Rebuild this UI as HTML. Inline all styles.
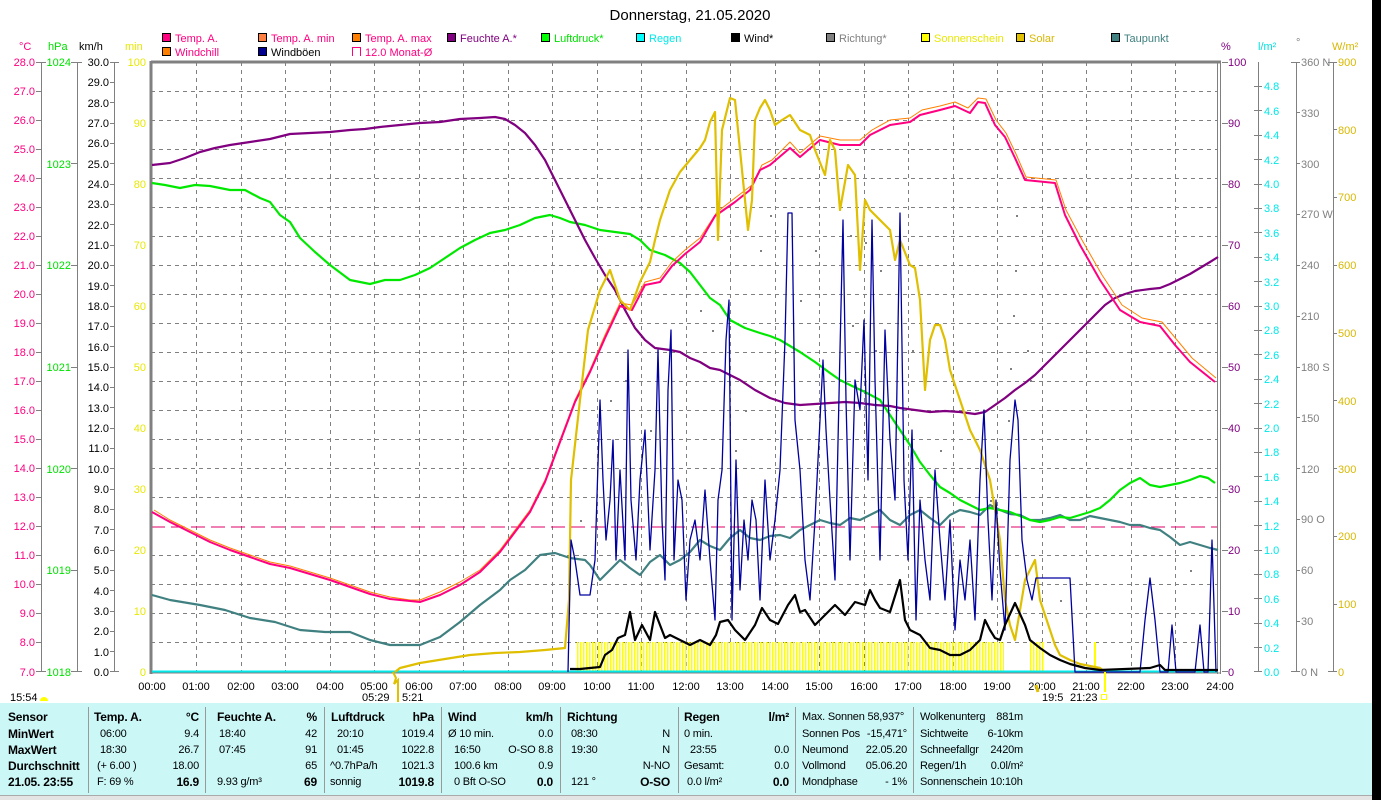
<!DOCTYPE html>
<html><head><meta charset="utf-8"><style>
html,body{margin:0;padding:0;background:#fff;width:1381px;height:800px;overflow:hidden;position:relative;font-family:"Liberation Sans",sans-serif;}
svg{position:absolute;left:0;top:0}
svg text{font-family:"Liberation Sans",sans-serif;font-size:11px}
#tbl{position:absolute;left:0;top:703px;width:1372px;height:92px;background:#cbf7f7;font-size:11px;color:#000;letter-spacing:-0.2px}
#tbl div{position:absolute;white-space:nowrap;line-height:14px}
.b{font-weight:bold;font-size:12px}
.r{text-align:right}
.sep{position:absolute;top:4px;width:1px;height:86px;background:#999}
#blk{position:absolute;left:1372px;top:0;width:9px;height:800px;background:#000}
#bot{position:absolute;left:0;top:795px;width:1372px;height:5px;background:#e4e4e4;border-top:1px solid #aaa}
</style></head><body>
<svg width="1381" height="703" viewBox="0 0 1381 703">
<defs>
<pattern id="sun" x="577" y="0" width="3" height="10" patternUnits="userSpaceOnUse"><rect x="0" y="0" width="1.5" height="10" fill="#ffff00"/></pattern>
</defs>
<text x="690" y="20" text-anchor="middle" style="font-size:15px">Donnerstag, 21.05.2020</text>
<g stroke="#000" stroke-width="1">
<rect x="162.5" y="33.5" width="8" height="8" fill="#ff0080"/>
<rect x="258.5" y="33.5" width="8" height="8" fill="#ff8040"/>
<rect x="352.5" y="33.5" width="8" height="8" fill="#ff8000"/>
<rect x="447.5" y="33.5" width="8" height="8" fill="#800080"/>
<rect x="541.5" y="33.5" width="8" height="8" fill="#00ff00"/>
<rect x="636.5" y="33.5" width="8" height="8" fill="#00ffff"/>
<rect x="731.5" y="33.5" width="8" height="8" fill="#000"/>
<rect x="826.5" y="33.5" width="8" height="8" fill="#808080"/>
<rect x="921.5" y="33.5" width="8" height="8" fill="#ffff00"/>
<rect x="1016.5" y="33.5" width="8" height="8" fill="#e0c000"/>
<rect x="1111.5" y="33.5" width="8" height="8" fill="#408080"/>
<rect x="162.5" y="47.5" width="8" height="8" fill="#ff8000"/>
<rect x="258.5" y="47.5" width="8" height="8" fill="#000090"/>
</g>
<path d="M352.5 56V47.5H360.5V56" fill="none" stroke="#ff0080"/>
<g>
<text x="175" y="42" fill="#ff0080">Temp. A.</text>
<text x="271" y="42" fill="#ff0080">Temp. A. min</text>
<text x="365" y="42" fill="#ff0080">Temp. A. max</text>
<text x="460" y="42" fill="#800080">Feuchte A.*</text>
<text x="554" y="42" fill="#00e000">Luftdruck*</text>
<text x="649" y="42" fill="#00e8e8">Regen</text>
<text x="744" y="42" fill="#000">Wind*</text>
<text x="839" y="42" fill="#808080">Richtung*</text>
<text x="934" y="42" fill="#e8e800">Sonnenschein</text>
<text x="1029" y="42" fill="#d8b800">Solar</text>
<text x="1124" y="42" fill="#408080">Taupunkt</text>
<text x="175" y="56" fill="#ff0080">Windchill</text>
<text x="271" y="56" fill="#000">Windböen</text>
<text x="365" y="56" fill="#ff0080">12.0 Monat-Ø</text>
</g>
<text x="19" y="50" fill="#ff0080">°C</text>
<text x="48" y="50" fill="#00e000">hPa</text>
<text x="79" y="50" fill="#000">km/h</text>
<text x="125" y="50" fill="#e8e800">min</text>
<text x="1221" y="50" fill="#800080">%</text>
<text x="1258" y="50" fill="#00e0e0">l/m²</text>
<text x="1296" y="46" fill="#808080">°</text>
<text x="1332" y="50" fill="#d8b800">W/m²</text>
<g stroke="#808080" stroke-width="1" stroke-dasharray="4,4">
<path d="M151 91.5H1217M151 120.5H1217M151 149.5H1217M151 178.5H1217M151 207.5H1217M151 236.5H1217M151 265.5H1217M151 294.5H1217M151 323.5H1217M151 352.5H1217M151 381.5H1217M151 410.5H1217M151 439.5H1217M151 468.5H1217M151 497.5H1217M151 555.5H1217M151 584.5H1217M151 613.5H1217M151 642.5H1217"/>
<path d="M196.5 62V672M241.5 62V672M285.5 62V672M330.5 62V672M374.5 62V672M419.5 62V672M463.5 62V672M508.5 62V672M552.5 62V672M597.5 62V672M641.5 62V672M686.5 62V672M730.5 62V672M775.5 62V672M819.5 62V672M864.5 62V672M908.5 62V672M953.5 62V672M997.5 62V672M1042.5 62V672M1086.5 62V672M1131.5 62V672M1175.5 62V672"/>
</g>
<path d="M151 527H1217" stroke="#e0006a" stroke-width="1" stroke-dasharray="14,6"/>
<path d="M151 61V674M151 62H1221" stroke="#808080" stroke-width="3" fill="none"/>
<path d="M1217.5 62V674M1220.5 62V674" stroke="#808080" stroke-width="1"/>
<path d="M151 673H1221" stroke="#808080" stroke-width="1"/>
<g stroke="#808080" stroke-width="1" fill="none">
<path d="M41.5 62V672M77.5 62V672M114.5 62V672"/>
<path d="M36 62.5H46M36 91.5H41M36 120.5H41M36 149.5H41M36 178.5H41M36 207.5H41M36 236.5H41M36 265.5H41M36 294.5H41M36 323.5H41M36 352.5H41M36 381.5H41M36 410.5H41M36 439.5H41M36 468.5H41M36 497.5H41M36 526.5H41M36 555.5H41M36 584.5H41M36 613.5H41M36 642.5H41M36 671.5H46"/>
<path d="M71 62.5H82M71 163.5H77M71 265.5H77M71 367.5H77M71 468.5H77M71 570.5H77M71 671.5H82"/>
<path d="M110 62.5H119M110 82.5H114M110 102.5H114M110 123.5H114M110 143.5H114M110 163.5H114M110 184.5H114M110 204.5H114M110 224.5H114M110 245.5H114M110 265.5H114M110 285.5H114M110 306.5H114M110 326.5H114M110 346.5H114M110 367.5H114M110 387.5H114M110 407.5H114M110 428.5H114M110 448.5H114M110 468.5H114M110 489.5H114M110 509.5H114M110 529.5H114M110 550.5H114M110 570.5H114M110 590.5H114M110 611.5H114M110 631.5H114M110 651.5H114M110 671.5H119"/>
</g>
<g fill="#ff0080" text-anchor="end">
<text x="35" y="66">28.0</text><text x="35" y="95">27.0</text><text x="35" y="124">26.0</text><text x="35" y="153">25.0</text><text x="35" y="182">24.0</text><text x="35" y="211">23.0</text><text x="35" y="240">22.0</text><text x="35" y="269">21.0</text><text x="35" y="298">20.0</text><text x="35" y="327">19.0</text><text x="35" y="356">18.0</text><text x="35" y="385">17.0</text><text x="35" y="414">16.0</text><text x="35" y="443">15.0</text><text x="35" y="472">14.0</text><text x="35" y="501">13.0</text><text x="35" y="530">12.0</text><text x="35" y="559">11.0</text><text x="35" y="588">10.0</text><text x="35" y="617">9.0</text><text x="35" y="646">8.0</text><text x="35" y="676">7.0</text>
</g>
<g fill="#00e000" text-anchor="end">
<text x="71" y="66">1024</text><text x="71" y="168">1023</text><text x="71" y="269">1022</text><text x="71" y="371">1021</text><text x="71" y="473">1020</text><text x="71" y="574">1019</text><text x="71" y="676">1018</text>
</g>
<g fill="#000" text-anchor="end">
<text x="109" y="66">30.0</text><text x="109" y="86">29.0</text><text x="109" y="107">28.0</text><text x="109" y="127">27.0</text><text x="109" y="147">26.0</text><text x="109" y="168">25.0</text><text x="109" y="188">24.0</text><text x="109" y="208">23.0</text><text x="109" y="229">22.0</text><text x="109" y="249">21.0</text><text x="109" y="269">20.0</text><text x="109" y="290">19.0</text><text x="109" y="310">18.0</text><text x="109" y="330">17.0</text><text x="109" y="351">16.0</text><text x="109" y="371">15.0</text><text x="109" y="391">14.0</text><text x="109" y="412">13.0</text><text x="109" y="432">12.0</text><text x="109" y="452">11.0</text><text x="109" y="473">10.0</text><text x="109" y="493">9.0</text><text x="109" y="513">8.0</text><text x="109" y="534">7.0</text><text x="109" y="554">6.0</text><text x="109" y="574">5.0</text><text x="109" y="595">4.0</text><text x="109" y="615">3.0</text><text x="109" y="635">2.0</text><text x="109" y="656">1.0</text><text x="109" y="676">0.0</text>
</g>
<g fill="#e8e800" text-anchor="end">
<text x="146" y="66">100</text><text x="146" y="127">90</text><text x="146" y="188">80</text><text x="146" y="249">70</text><text x="146" y="310">60</text><text x="146" y="371">50</text><text x="146" y="432">40</text><text x="146" y="493">30</text><text x="146" y="554">20</text><text x="146" y="615">10</text><text x="146" y="676">0</text>
</g>
<g stroke="#808080" stroke-width="1" fill="none">
<path d="M1222 62.5H1228M1222 123.5H1228M1222 184.5H1228M1222 245.5H1228M1222 306.5H1228M1222 367.5H1228M1222 428.5H1228M1222 489.5H1228M1222 550.5H1228M1222 611.5H1228M1222 671.5H1228"/>
<path d="M1258.5 62V672M1296.5 62V672M1333.5 62V672"/>
<path d="M1254 86.5H1262M1254 110.5H1262M1254 135.5H1262M1254 159.5H1262M1254 184.5H1262M1254 208.5H1262M1254 232.5H1262M1254 257.5H1262M1254 281.5H1262M1254 306.5H1262M1254 330.5H1262M1254 354.5H1262M1254 379.5H1262M1254 403.5H1262M1254 428.5H1262M1254 452.5H1262M1254 476.5H1262M1254 501.5H1262M1254 525.5H1262M1254 550.5H1262M1254 574.5H1262M1254 598.5H1262M1254 623.5H1262M1254 647.5H1262M1254 671.5H1262"/>
<path d="M1291 62.5H1300M1296 112.5H1300M1296 163.5H1300M1296 214.5H1300M1296 265.5H1300M1296 316.5H1300M1296 367.5H1300M1296 417.5H1300M1296 468.5H1300M1296 519.5H1300M1296 570.5H1300M1296 621.5H1300M1291 671.5H1300"/>
<path d="M1328 62.5H1337M1333 129.5H1337M1333 197.5H1337M1333 265.5H1337M1333 333.5H1337M1333 400.5H1337M1333 468.5H1337M1333 536.5H1337M1333 604.5H1337M1328 671.5H1337"/>
</g>
<g fill="#800080">
<text x="1228" y="66">100</text><text x="1228" y="127">90</text><text x="1228" y="188">80</text><text x="1228" y="249">70</text><text x="1228" y="310">60</text><text x="1228" y="371">50</text><text x="1228" y="432">40</text><text x="1228" y="493">30</text><text x="1228" y="554">20</text><text x="1228" y="615">10</text><text x="1228" y="676">0</text>
</g>
<g fill="#00e8e8">
<text x="1264" y="90">4.8</text><text x="1264" y="115">4.6</text><text x="1264" y="139">4.4</text><text x="1264" y="164">4.2</text><text x="1264" y="188">4.0</text><text x="1264" y="212">3.8</text><text x="1264" y="237">3.6</text><text x="1264" y="261">3.4</text><text x="1264" y="286">3.2</text><text x="1264" y="310">3.0</text><text x="1264" y="334">2.8</text><text x="1264" y="359">2.6</text><text x="1264" y="383">2.4</text><text x="1264" y="408">2.2</text><text x="1264" y="432">2.0</text><text x="1264" y="456">1.8</text><text x="1264" y="481">1.6</text><text x="1264" y="505">1.4</text><text x="1264" y="530">1.2</text><text x="1264" y="554">1.0</text><text x="1264" y="578">0.8</text><text x="1264" y="603">0.6</text><text x="1264" y="627">0.4</text><text x="1264" y="652">0.2</text><text x="1264" y="676">0.0</text>
</g>
<g fill="#808080">
<text x="1301" y="66">360 N</text><text x="1301" y="117">330</text><text x="1301" y="168">300</text><text x="1301" y="218">270 W</text><text x="1301" y="269">240</text><text x="1301" y="320">210</text><text x="1301" y="371">180 S</text><text x="1301" y="422">150</text><text x="1301" y="473">120</text><text x="1301" y="523">90 O</text><text x="1301" y="574">60</text><text x="1301" y="625">30</text><text x="1301" y="676">0 N</text>
</g>
<g fill="#d8b800">
<text x="1338" y="66">900</text><text x="1338" y="134">800</text><text x="1338" y="201">700</text><text x="1338" y="269">600</text><text x="1338" y="337">500</text><text x="1338" y="405">400</text><text x="1338" y="473">300</text><text x="1338" y="540">200</text><text x="1338" y="608">100</text><text x="1338" y="676">0</text>
</g>
<rect x="577" y="642" width="427" height="30" fill="url(#sun)"/>
<rect x="1030" y="642" width="15" height="30" fill="url(#sun)"/>
<rect x="1094" y="642" width="2" height="30" fill="#ffff00"/>
<path d="M152 671.5H1217" stroke="#00e8e8" stroke-width="2"/>
<g fill="#808080">
<rect x="610" y="400" width="2" height="2"/><rect x="625" y="380" width="2" height="2"/><rect x="650" y="430" width="2" height="2"/><rect x="700" y="310" width="2" height="2"/><rect x="712" y="330" width="2" height="2"/><rect x="745" y="410" width="2" height="2"/><rect x="760" y="250" width="2" height="2"/><rect x="770" y="215" width="2" height="2"/><rect x="800" y="300" width="2" height="2"/><rect x="815" y="250" width="2" height="2"/><rect x="850" y="235" width="2" height="2"/><rect x="865" y="242" width="2" height="2"/><rect x="880" y="270" width="2" height="2"/><rect x="852" y="325" width="2" height="2"/><rect x="875" y="350" width="2" height="2"/><rect x="912" y="350" width="2" height="2"/><rect x="940" y="450" width="2" height="2"/><rect x="1016" y="215" width="2" height="2"/><rect x="1015" y="270" width="2" height="2"/><rect x="1013" y="315" width="2" height="2"/><rect x="1010" y="368" width="2" height="2"/><rect x="1027" y="350" width="2" height="2"/><rect x="1008" y="420" width="2" height="2"/><rect x="1030" y="380" width="2" height="2"/><rect x="735" y="450" width="2" height="2"/><rect x="580" y="520" width="2" height="2"/><rect x="990" y="500" width="2" height="2"/><rect x="1060" y="600" width="2" height="2"/><rect x="1190" y="570" width="2" height="2"/>
</g>
<g fill="none" stroke-linejoin="round">
<polyline stroke="#408080" stroke-width="2.2" points="152,595 170,600 200,605 225,610 250,618 275,622 300,630 325,632 350,632 370,640 390,645 420,645 440,637 460,622 480,605 500,590 510,580 525,570 540,555 555,553 570,558 585,560 590,565 600,580 610,570 620,560 630,568 640,575 650,562 660,555 670,565 680,560 690,552 700,540 710,546 720,550 730,538 740,530 750,538 760,540 770,536 780,535 790,538 800,530 810,525 820,520 830,523 840,525 850,518 860,520 870,515 880,510 890,520 900,525 910,515 920,510 930,518 940,525 950,515 960,510 970,512 980,515 990,505 1000,510 1010,514 1020,515 1030,520 1040,520 1050,518 1060,515 1070,520 1080,520 1090,516 1100,518 1110,520 1120,522 1130,525 1140,525 1150,528 1160,530 1170,537 1180,545 1190,542 1200,545 1210,548 1218,550"/>
<polyline stroke="#00e800" stroke-width="2.2" points="152,183 165,185 180,188 195,185 210,186 230,190 245,190 260,198 270,202 280,215 290,222 300,238 315,252 330,265 350,280 370,284 385,280 400,280 415,275 430,268 445,258 460,248 475,240 490,233 505,230 520,225 535,218 550,215 560,218 570,222 585,225 600,230 615,232 630,234 640,240 650,250 665,255 680,263 690,272 700,285 710,298 720,305 730,320 745,328 760,333 770,336 780,340 790,346 800,352 815,362 830,373 840,380 850,385 865,392 880,400 890,415 900,430 910,445 920,462 930,475 940,487 950,493 960,500 970,505 980,510 990,508 1000,510 1010,512 1020,516 1030,520 1040,522 1050,520 1060,517 1070,518 1080,515 1090,512 1100,508 1110,500 1120,490 1130,483 1140,478 1150,485 1160,487 1170,485 1180,483 1190,480 1200,476 1208,478 1215,483"/>
<polyline stroke="#800080" stroke-width="2.2" points="152,165 170,163 185,158 200,152 215,148 230,145 250,142 270,139 290,134 310,133 330,132 350,130 365,129 380,127 400,125 420,123 440,122 460,119 480,118 495,117 505,119 515,125 525,133 535,145 545,160 555,180 565,200 575,220 585,240 595,258 605,275 615,290 625,310 635,328 645,340 655,348 670,350 680,352 690,358 700,362 710,368 720,370 730,375 740,380 755,390 770,398 785,403 800,405 815,404 830,403 845,402 860,403 875,405 890,406 900,408 915,410 930,412 945,411 960,412 975,414 985,412 995,405 1005,398 1015,390 1025,383 1035,375 1045,365 1055,355 1065,345 1075,335 1085,325 1095,315 1105,305 1115,298 1125,294 1135,291 1150,289 1160,288 1170,284 1180,279 1190,274 1200,268 1210,262 1218,257"/>
<polyline stroke="#ff8000" stroke-width="1" points="154,510 170,520 190,530 210,540 230,548 250,555 270,562 290,566 310,572 330,578 350,585 370,592 390,597 410,600 420,600 440,592 460,582 480,570 500,550 515,530 530,510 545,480 560,440 575,400 590,370 605,335 620,303 632,305 645,282 660,278 672,262 685,250 700,238 717,212 735,198 752,185 762,165 772,160 790,142 800,153 820,136 840,140 860,140 872,130 890,120 910,118 922,110 940,106 955,102 968,108 978,98 986,99 996,120 1006,133 1016,154 1026,177 1046,179 1056,180 1066,210 1082,240 1102,275 1122,305 1142,318 1162,322 1177,340 1192,358 1216,378"/>
<polyline stroke="#ff0080" stroke-width="2" points="152,512 170,522 190,532 210,542 230,550 250,557 270,564 290,568 310,574 330,580 350,587 370,594 390,599 410,601 420,602 440,595 460,585 480,572 500,552 515,532 530,512 545,482 560,442 575,402 590,372 605,338 620,306 632,310 645,285 660,282 672,266 685,254 700,242 715,216 735,202 750,190 760,170 770,165 790,148 800,157 820,140 840,145 860,145 870,135 890,125 910,122 920,115 940,110 955,106 970,113 978,102 985,103 995,125 1005,137 1015,158 1025,180 1045,182 1055,183 1065,215 1080,245 1100,280 1120,310 1140,322 1160,326 1175,345 1190,362 1215,382"/>
<polyline stroke="#dfbf00" stroke-width="2.2" points="395,672 400,668 420,663 445,659 470,655 495,653 520,652 545,650 565,648 569,600 571,480 580,400 588,330 600,290 610,270 615,285 620,300 630,310 640,282 650,262 655,240 660,220 670,190 680,172 690,160 700,148 705,140 710,122 715,112 718,240 722,130 730,98 735,100 740,150 748,230 752,200 755,120 760,108 765,100 770,110 775,125 782,120 790,115 800,130 810,135 815,150 825,175 830,140 835,150 840,210 848,165 855,175 860,270 865,200 870,210 880,220 890,230 895,260 900,240 910,265 915,268 920,300 925,390 930,340 935,325 940,325 945,340 950,370 960,400 970,430 980,450 990,480 1000,540 1005,600 1010,625 1015,640 1020,610 1025,580 1030,570 1035,560 1040,600 1045,615 1050,630 1055,645 1060,655 1070,660 1080,664 1100,668 1105,672"/>
<polyline stroke="#0000a0" stroke-width="1.3" points="568,672 571,540 575,560 580,595 590,595 595,560 600,400 603,480 606,540 610,500 613,440 616,560 620,470 625,560 628,350 631,500 636,560 640,480 645,430 650,550 655,470 658,350 662,520 665,580 668,390 671,330 674,560 678,480 682,500 686,600 690,540 695,520 700,560 705,490 710,560 715,620 718,500 722,470 726,340 729,300 732,620 736,460 740,590 744,520 748,560 752,500 756,520 760,600 765,480 770,560 775,520 780,470 785,340 788,213 792,213 795,420 800,470 805,560 810,600 815,520 820,420 823,360 826,430 830,500 835,580 840,350 843,220 846,400 850,560 855,380 860,410 864,320 868,480 872,220 875,380 880,560 885,330 890,440 895,500 900,213 904,480 908,560 912,430 916,620 920,500 925,560 930,600 935,470 940,540 945,600 950,520 955,630 960,560 965,600 970,540 975,620 980,480 984,410 988,520 992,600 996,500 1000,570 1005,630 1010,460 1015,400 1018,420 1022,540 1027,580 1032,600 1036,578 1070,578 1075,672 1140,672 1145,620 1150,578 1155,620 1160,672 1168,672 1172,625 1176,672 1195,672 1200,625 1204,672 1208,672 1212,540 1216,672"/>
<polyline stroke="#000" stroke-width="2.2" points="570,669 580,669 600,667 605,655 612,650 618,638 625,635 630,612 635,640 642,625 650,640 655,612 660,625 665,638 670,635 680,640 690,645 700,640 710,645 716,635 720,622 728,620 735,630 745,640 755,625 762,608 770,620 778,624 788,605 795,595 800,612 805,610 815,625 825,615 835,605 845,615 855,602 865,605 870,590 875,600 880,608 890,612 900,580 905,620 910,630 920,635 930,648 940,650 950,655 960,655 970,650 980,640 985,620 990,630 995,638 1000,640 1005,625 1015,603 1025,625 1030,640 1040,648 1050,655 1060,660 1070,664 1085,668 1100,670 1150,668 1160,665 1165,670 1218,670"/>
</g>
<g fill="#000" text-anchor="middle">
<text x="152" y="690">00:00</text><text x="196" y="690">01:00</text><text x="241" y="690">02:00</text><text x="285" y="690">03:00</text><text x="330" y="690">04:00</text><text x="374" y="690">05:00</text><text x="419" y="690">06:00</text><text x="463" y="690">07:00</text><text x="508" y="690">08:00</text><text x="552" y="690">09:00</text><text x="597" y="690">10:00</text><text x="641" y="690">11:00</text><text x="686" y="690">12:00</text><text x="730" y="690">13:00</text><text x="775" y="690">14:00</text><text x="819" y="690">15:00</text><text x="864" y="690">16:00</text><text x="908" y="690">17:00</text><text x="953" y="690">18:00</text><text x="997" y="690">19:00</text><text x="1042" y="690">20:00</text><text x="1086" y="690">21:00</text><text x="1131" y="690">22:00</text><text x="1175" y="690">23:00</text><text x="1220" y="690">24:00</text>
</g>
<text x="10" y="701">15:54</text>
<path d="M40 701a4 4 0 0 1 8 0z" fill="#ffff00"/>
<text x="362" y="701">05:29</text>
<path d="M393 672L396 678L394 684L398 680L398 702" stroke="#e0c000" stroke-width="2" fill="none"/>
<text x="402" y="701">5:21</text>
<path d="M1036 685L1038 692" stroke="#e0c000" stroke-width="3"/>
<text x="1042" y="701">19:5</text>
<text x="1070" y="701">21:23</text>
<rect x="1101.5" y="694.5" width="5" height="5" fill="none" stroke="#ffff00"/>
<path d="M1105 672V692" stroke="#ffff00" stroke-width="2"/>
</svg>

<div id="tbl">
<div class="sep" style="left:88px"></div><div class="sep" style="left:205px"></div><div class="sep" style="left:324px"></div><div class="sep" style="left:441px"></div><div class="sep" style="left:560px"></div><div class="sep" style="left:678px"></div><div class="sep" style="left:795px"></div><div class="sep" style="left:913px"></div>
<div class="b" style="left:8px;top:7px">Sensor</div>
<div class="b" style="left:8px;top:24px">MinWert</div>
<div class="b" style="left:8px;top:40px">MaxWert</div>
<div class="b" style="left:8px;top:56px">Durchschnitt</div>
<div class="b" style="left:8px;top:72px">21.05. 23:55</div>

<div class="b" style="left:94px;top:7px">Temp. A.</div><div class="b r" style="right:1173px;top:7px">°C</div>
<div style="left:100px;top:24px">06:00</div><div class="r" style="right:1173px;top:24px">9.4</div>
<div style="left:100px;top:40px">18:30</div><div class="r" style="right:1173px;top:40px">26.7</div>
<div style="left:97px;top:56px">(+ 6.00 )</div><div class="r" style="right:1173px;top:56px">18.00</div>
<div style="left:97px;top:72px">F: 69 %</div><div class="b r" style="right:1173px;top:72px">16.9</div>

<div class="b" style="left:217px;top:7px">Feuchte A.</div><div class="b r" style="right:1055px;top:7px">%</div>
<div style="left:219px;top:24px">18:40</div><div class="r" style="right:1055px;top:24px">42</div>
<div style="left:219px;top:40px">07:45</div><div class="r" style="right:1055px;top:40px">91</div>
<div class="r" style="right:1055px;top:56px">65</div>
<div style="left:217px;top:72px">9.93 g/m³</div><div class="b r" style="right:1055px;top:72px">69</div>

<div class="b" style="left:331px;top:7px">Luftdruck</div><div class="b r" style="right:938px;top:7px">hPa</div>
<div style="left:337px;top:24px">20:10</div><div class="r" style="right:938px;top:24px">1019.4</div>
<div style="left:337px;top:40px">01:45</div><div class="r" style="right:938px;top:40px">1022.8</div>
<div style="left:330px;top:56px">^0.7hPa/h</div><div class="r" style="right:938px;top:56px">1021.3</div>
<div style="left:330px;top:72px">sonnig</div><div class="b r" style="right:938px;top:72px">1019.8</div>

<div class="b" style="left:448px;top:7px">Wind</div><div class="b r" style="right:819px;top:7px">km/h</div>
<div style="left:448px;top:24px">Ø 10 min.</div><div class="r" style="right:819px;top:24px">0.0</div>
<div style="left:454px;top:40px">16:50</div><div class="r" style="right:819px;top:40px">O-SO 8.8</div>
<div style="left:454px;top:56px">100.6 km</div><div class="r" style="right:819px;top:56px">0.9</div>
<div style="left:454px;top:72px">0 Bft O-SO</div><div class="b r" style="right:819px;top:72px">0.0</div>

<div class="b" style="left:567px;top:7px">Richtung</div>
<div style="left:571px;top:24px">08:30</div><div class="r" style="right:702px;top:24px">N</div>
<div style="left:571px;top:40px">19:30</div><div class="r" style="right:702px;top:40px">N</div>
<div class="r" style="right:702px;top:56px">N-NO</div>
<div style="left:571px;top:72px">121 °</div><div class="b r" style="right:702px;top:72px">O-SO</div>

<div class="b" style="left:684px;top:7px">Regen</div><div class="b r" style="right:583px;top:7px">l/m²</div>
<div style="left:684px;top:24px">0 min.</div>
<div style="left:690px;top:40px">23:55</div><div class="r" style="right:583px;top:40px">0.0</div>
<div style="left:684px;top:56px">Gesamt:</div><div class="r" style="right:583px;top:56px">0.0</div>
<div style="left:687px;top:72px">0.0 l/m²</div><div class="b r" style="right:583px;top:72px">0.0</div>

<div style="left:802px;top:7px">Max. Sonnen 58,937°</div>
<div style="left:802px;top:24px">Sonnen Pos</div><div class="r" style="right:465px;top:24px">-15,471°</div>
<div style="left:802px;top:40px">Neumond</div><div class="r" style="right:465px;top:40px">22.05.20</div>
<div style="left:802px;top:56px">Vollmond</div><div class="r" style="right:465px;top:56px">05.06.20</div>
<div style="left:802px;top:72px">Mondphase</div><div class="r" style="right:465px;top:72px">- 1%</div>

<div style="left:920px;top:7px">Wolkenunterg</div><div class="r" style="right:349px;top:7px">881m</div>
<div style="left:920px;top:24px">Sichtweite</div><div class="r" style="right:349px;top:24px">6-10km</div>
<div style="left:920px;top:40px">Schneefallgr</div><div class="r" style="right:349px;top:40px">2420m</div>
<div style="left:920px;top:56px">Regen/1h</div><div class="r" style="right:349px;top:56px">0.0l/m²</div>
<div style="left:920px;top:72px">Sonnenschein 10:10h</div>
</div>
<div id="bot"></div>
<div id="blk"></div>
</body></html>
